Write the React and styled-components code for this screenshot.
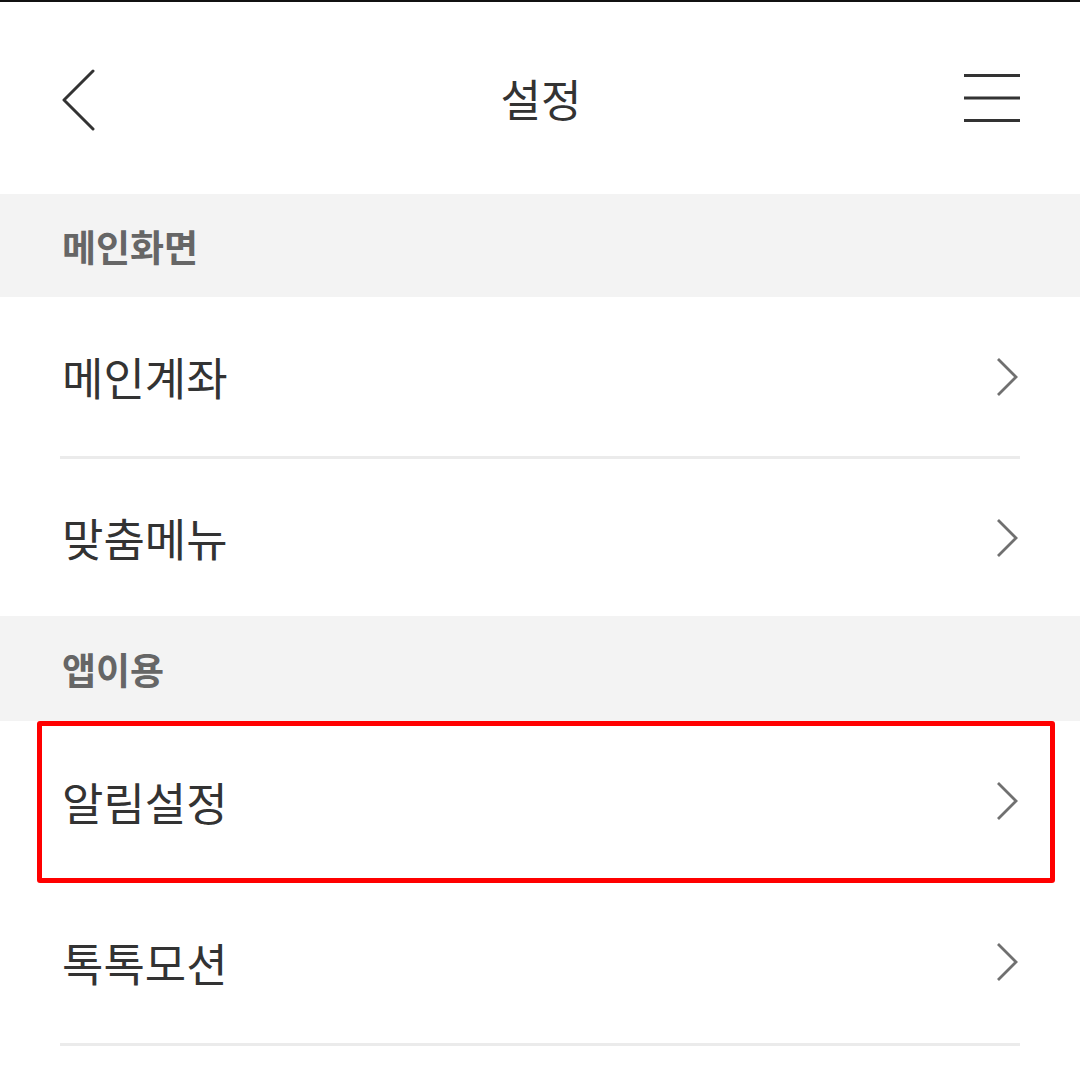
import React from 'react';
import styled, { createGlobalStyle } from 'styled-components';

const GlobalStyle = createGlobalStyle`
  html, body {
    margin: 0;
    padding: 0;
    background: #fff;
  }
  body {
    font-family: "Noto Sans CJK KR", "Noto Sans", sans-serif;
    color: #333;
  }
`;

const Page = styled.div`
  width: 1080px;
  min-height: 1074px;
  border-top: 2px solid #111;
  box-sizing: border-box;
  background: #fff;
  overflow: hidden;
`;

const Header = styled.header`
  height: 192px;
  display: grid;
  grid-template-columns: 1fr auto 1fr;
  align-items: center;
  padding: 0 60px 0 62px;
`;

const IconButton = styled.button`
  border: 0;
  padding: 0;
  background: none;
  display: flex;
  justify-self: ${({ end }) => (end ? 'end' : 'start')};
  margin-top: ${({ offset }) => offset || 0}px;
`;

const Title = styled.h1`
  margin: 0;
  font-size: 44px;
  font-weight: 400;
  color: #333;
`;

const SectionHeader = styled.div`
  background: #f3f3f3;
  height: ${({ h }) => h}px;
  display: flex;
  align-items: center;
  padding: 0 62px;
  font-size: 37px;
  font-weight: 700;
  color: #666;
`;

const Row = styled.div`
  position: relative;
  height: ${({ h }) => h}px;
  display: flex;
  align-items: center;
  justify-content: space-between;
  padding: 0 60px 0 62px;
  font-size: 45px;
  color: #333;

  ${({ highlight }) =>
    highlight &&
    `
    &::after {
      content: '';
      position: absolute;
      left: 37px;
      right: 25px;
      top: 0;
      bottom: -2px;
      border: 5px solid #ff0000;
      border-radius: 3px;
      box-sizing: border-box;
      pointer-events: none;
    }
  `}
`;

const Divider = styled.div`
  height: 3px;
  margin: 0 60px;
  background: #ebebeb;
`;

const BackIcon = () => (
  <svg width="34" height="62" viewBox="0 0 34 62">
    <path d="M31 2 L2 31 L31 60" fill="none" stroke="#333" strokeWidth="3" strokeLinejoin="round" strokeLinecap="round" />
  </svg>
);

const MenuIcon = () => (
  <svg width="56" height="50" viewBox="0 0 56 50">
    <path d="M0 2.5 H56 M0 25 H56 M0 47.5 H56" stroke="#333" strokeWidth="3" />
  </svg>
);

const Chevron = () => (
  <svg width="24" height="40" viewBox="0 0 24 40">
    <path d="M2 2 L20 20 L2 38" fill="none" stroke="#707070" strokeWidth="2.8" />
  </svg>
);

const Item = ({ label, h = 159, highlight }) => (
  <Row h={h} highlight={highlight}>
    <span>{label}</span>
    <Chevron />
  </Row>
);

export default function App() {
  return (
    <Page>
      <GlobalStyle />
      <Header>
        <IconButton offset={4}>
          <BackIcon />
        </IconButton>
        <Title>설정</Title>
        <IconButton end>
          <MenuIcon />
        </IconButton>
      </Header>

      <SectionHeader h={103}>메인화면</SectionHeader>
      <Item label="메인계좌" />
      <Divider />
      <Item label="맞춤메뉴" h={157} />

      <SectionHeader h={105}>앱이용</SectionHeader>
      <Item label="알림설정" h={160} highlight />
      <Item label="톡톡모션" h={162} />
      <Divider />
    </Page>
  );
}
